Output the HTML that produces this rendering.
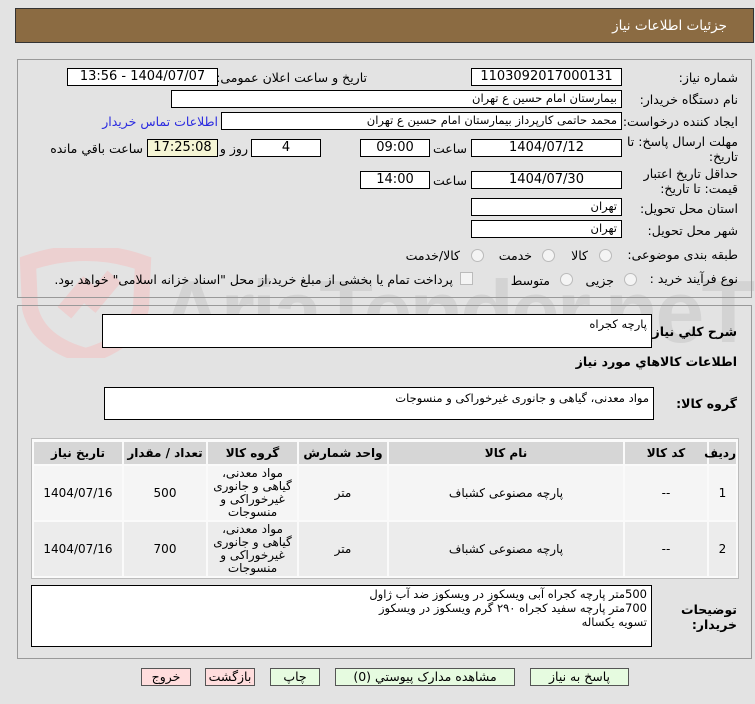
<!DOCTYPE html>
<html><head><meta charset="utf-8"><style>
body{margin:0;width:755px;height:704px;background:#e3e3e3;position:relative;overflow:hidden;font-family:"DejaVu Sans","Liberation Sans",sans-serif;font-size:11.5px;color:#000}
.a{position:absolute}
.box{position:absolute;background:#fff;border:1px solid #000;box-sizing:border-box;direction:rtl;padding:0 4px;line-height:15px;white-space:nowrap}
.c{text-align:center;font-size:13px}
.l{position:absolute;direction:rtl;white-space:nowrap;font-size:12.5px}
.rad{position:absolute;width:11px;height:11px;border:1px solid #bbb;border-radius:50%;background:#f4f4f4}
table{border-collapse:separate;border-spacing:2px;direction:rtl;table-layout:fixed}
td,th{text-align:center;font-size:12px;line-height:17px;padding:0}
th{background:#d6d6d6;height:22px;font-weight:bold}
.btn{position:absolute;top:668px;height:18px;border:1px solid #555;box-sizing:border-box;text-align:center;font-size:12.5px;line-height:16px;direction:rtl}
</style></head><body>
<div class="a" style="left:15px;top:8px;width:739px;height:35px;background:#8b6b42;border:1px solid #333;box-sizing:border-box"></div>
<div class="l" style="right:28px;top:18px;color:#fff;font-size:13.5px">جزئیات اطلاعات نیاز</div>
<!-- watermark -->
<svg class="a" style="left:18px;top:248px" width="135" height="110"><path d="M10 15 Q68 -5 125 15 L123 60 Q115 95 68 108 Q20 95 12 60Z" fill="none" stroke="#ecd0d0" stroke-width="16"/><rect x="50" y="30" width="18" height="40" fill="#ecd0d0" transform="rotate(40 60 50)"/><rect x="74" y="25" width="18" height="40" fill="#ecd0d0" transform="rotate(40 85 45)"/></svg>
<div class="a" style="left:160px;top:262px;font-size:88px;font-family:'Liberation Sans';color:rgba(0,0,0,0.07);font-weight:bold;letter-spacing:-3px;line-height:100px">AriaTender.neT</div>
<div class="a" style="left:17px;top:59px;width:735px;height:239px;border:1px solid #999;box-sizing:border-box"></div>
<div class="a" style="left:17px;top:305px;width:735px;height:354px;border:1px solid #999;box-sizing:border-box"></div>

<div class="l" style="right:17px;top:70px">شماره نیاز:</div>
<div class="box c" style="left:471px;top:68px;width:151px;height:18px">1103092017000131</div>
<div class="l" style="right:388px;top:70px">تاریخ و ساعت اعلان عمومی:</div>
<div class="box c" style="left:67px;top:68px;width:151px;height:18px">1404/07/07 - 13:56</div>
<div class="l" style="right:17px;top:92px">نام دستگاه خریدار:</div>
<div class="box" style="left:171px;top:90px;width:451px;height:18px">بیمارستان امام حسین  ع  تهران</div>
<div class="l" style="right:17px;top:114px">ایجاد کننده درخواست:</div>
<div class="box" style="left:221px;top:112px;width:401px;height:18px">محمد حاتمی کارپرداز بیمارستان امام حسین  ع  تهران</div>
<div class="l" style="right:537px;top:114px;color:#2a2ae0">اطلاعات تماس خریدار</div>
<div class="l" style="right:17px;top:134px;line-height:15px">مهلت ارسال پاسخ: تا<br>تاریخ:</div>
<div class="box c" style="left:471px;top:139px;width:151px;height:18px">1404/07/12</div>
<div class="l" style="right:288px;top:141px">ساعت</div>
<div class="box c" style="left:360px;top:139px;width:70px;height:18px">09:00</div>
<div class="box c" style="left:251px;top:139px;width:70px;height:18px">4</div>
<div class="l" style="right:507px;top:141px">روز و</div>
<div class="box c" style="left:147px;top:139px;width:71px;height:18px;background:#f5f5d5">17:25:08</div>
<div class="l" style="right:612px;top:141px">ساعت باقي مانده</div>
<div class="l" style="right:17px;top:166px;line-height:15px">حداقل تاریخ اعتبار<br>قیمت: تا تاریخ:</div>
<div class="box c" style="left:471px;top:171px;width:151px;height:18px">1404/07/30</div>
<div class="l" style="right:288px;top:173px">ساعت</div>
<div class="box c" style="left:360px;top:171px;width:70px;height:18px">14:00</div>
<div class="l" style="right:17px;top:201px">استان محل تحویل:</div>
<div class="box" style="left:471px;top:198px;width:151px;height:18px">تهران</div>
<div class="l" style="right:17px;top:223px">شهر محل تحویل:</div>
<div class="box" style="left:471px;top:220px;width:151px;height:18px">تهران</div>
<div class="l" style="right:17px;top:247px">طبقه بندی موضوعی:</div>
<div class="rad" style="left:599px;top:249px"></div><div class="l" style="right:167px;top:248px">کالا</div>
<div class="rad" style="left:542px;top:249px"></div><div class="l" style="right:223px;top:248px">خدمت</div>
<div class="rad" style="left:471px;top:249px"></div><div class="l" style="right:295px;top:248px">کالا/خدمت</div>
<div class="l" style="right:17px;top:271px">نوع فرآیند خرید :</div>
<div class="rad" style="left:624px;top:273px"></div><div class="l" style="right:141px;top:273px">جزیی</div>
<div class="rad" style="left:560px;top:273px"></div><div class="l" style="right:205px;top:273px">متوسط</div>
<div class="a" style="left:460px;top:272px;width:11px;height:11px;border:1px solid #bbb;background:#f4f4f4"></div>
<div class="l" style="right:302px;top:272px">پرداخت تمام یا بخشی از مبلغ خرید،از محل "اسناد خزانه اسلامی" خواهد بود.</div>

<div class="l" style="right:18px;top:324px;font-weight:bold;font-size:12.5px">شرح کلي نياز:</div>
<div class="box" style="left:102px;top:314px;width:550px;height:34px;padding-top:2px">پارچه کجراه</div>
<div class="l" style="right:18px;top:354px;font-weight:bold;font-size:12.5px">اطلاعات کالاهاي مورد نياز</div>
<div class="l" style="right:18px;top:396px;font-weight:bold;font-size:12.5px">گروه کالا:</div>
<div class="box" style="left:104px;top:387px;width:550px;height:33px;padding-top:3px">مواد معدنی، گیاهی و جانوری غیرخوراکی و منسوجات</div>

<div class="a" style="left:31px;top:438px;width:708px;height:141px;border:1px solid #bbb;box-sizing:border-box;background:#fafafa">
<table style="width:706px;margin-top:1px">
<colgroup><col style="width:27px"><col style="width:82px"><col style="width:234px"><col style="width:88px"><col style="width:89px"><col style="width:82px"><col></colgroup>
<tr><th>ردیف</th><th>کد کالا</th><th>نام کالا</th><th>واحد شمارش</th><th>گروه کالا</th><th>تعداد / مقدار</th><th>تاریخ نیاز</th></tr>
<tr style="height:54px"><td style="background:#f5f5f5">1</td><td style="background:#f5f5f5">--</td><td style="background:#f5f5f5">پارچه مصنوعی کشباف</td><td style="background:#f5f5f5">متر</td><td style="background:#f5f5f5;line-height:13px">مواد معدنی، گیاهی و جانوری غیرخوراکی و منسوجات</td><td style="background:#f5f5f5">500</td><td style="background:#f5f5f5">1404/07/16</td></tr>
<tr style="height:54px"><td style="background:#ececec">2</td><td style="background:#ececec">--</td><td style="background:#ececec">پارچه مصنوعی کشباف</td><td style="background:#ececec">متر</td><td style="background:#ececec;line-height:13px">مواد معدنی، گیاهی و جانوری غیرخوراکی و منسوجات</td><td style="background:#ececec">700</td><td style="background:#ececec">1404/07/16</td></tr>
</table></div>

<div class="l" style="right:18px;top:602px;font-weight:bold;font-size:12.5px;line-height:15px">توضیحات<br>خریدار:</div>
<div class="box" style="left:31px;top:585px;width:621px;height:62px;padding-top:1px;line-height:14px">500متر پارچه کجراه آبی  ویسکوز در ویسکوز ضد آب ژاول<br>700متر پارچه سفید کجراه ۲۹۰ گرم ویسکوز در ویسکوز<br>تسویه یکساله</div>

<div class="btn" style="left:141px;width:50px;background:#fdd">خروج</div>
<div class="btn" style="left:205px;width:50px;background:#fdd">بازگشت</div>
<div class="btn" style="left:270px;width:50px;background:#e6fbe0">چاپ</div>
<div class="btn" style="left:335px;width:180px;background:#e6fbe0">مشاهده مدارک پیوستي (0)</div>
<div class="btn" style="left:530px;width:99px;background:#e6fbe0">پاسخ به نیاز</div>
</body></html>
